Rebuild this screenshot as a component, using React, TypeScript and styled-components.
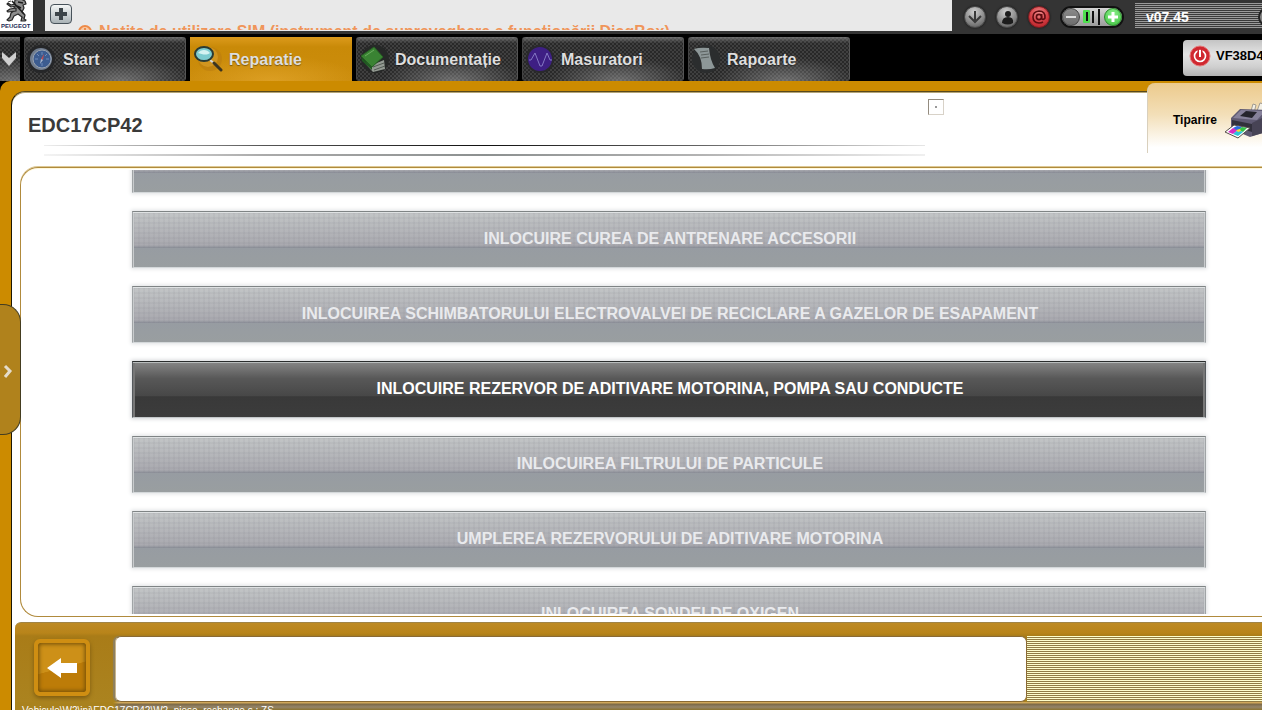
import React from "react";
import styled, { createGlobalStyle, css } from "styled-components";

const sans = '"Liberation Sans", Arial, sans-serif';
const gold = "#cc8b00";

const GlobalStyle = createGlobalStyle`
  *, *::before, *::after { box-sizing: border-box; }
  html, body { margin: 0; padding: 0; }
  body { font-family: ${sans}; background: #000; overflow: hidden; }
  button, input { font-family: inherit; margin: 0; padding: 0; border: 0; }
  button { cursor: pointer; }
`;

const Page = styled.div`
  position: relative;
  height: 100vh;
  display: flex;
  flex-direction: column;
  overflow: hidden;
`;

/* ---------- status bar ---------- */

const StatusBar = styled.header`
  flex: none;
  display: flex;
  align-items: flex-start;
  height: 34px;
  background: #343434;
`;

const Logo = styled.div`
  flex: none;
  width: 45px;
  height: 31px;
  background: linear-gradient(90deg, #fff 33px, #333 33px);
  svg { display: block; }
`;

const Notices = styled.div`
  flex: 1;
  min-width: 0;
  height: 31px;
  display: flex;
  gap: 6px;
  padding-left: 5px;
  background: #e9e9e9;
  overflow: hidden;
`;

const AddButton = styled.button`
  flex: none;
  width: 22px;
  height: 20px;
  margin-top: 4px;
  border: 1px solid #47525a;
  border-radius: 4px;
  background: linear-gradient(#f4f6f6, #a9b2b6);
  svg { display: block; margin: auto; }
`;

const NoticeClip = styled.div`
  display: flex;
  height: 30px;
  overflow: hidden;
`;

const Notice = styled.p`
  margin: 22px 0 0;
  display: flex;
  align-items: center;
  gap: 7px;
  height: 20px;
  font-size: 16px;
  line-height: 20px;
  font-weight: 700;
  white-space: nowrap;
  color: #f0955a;
  svg { flex: none; }
`;

const Tools = styled.div`
  flex: none;
  width: 310px;
  height: 34px;
  display: flex;
  align-items: center;
  padding-left: 12px;
  overflow: hidden;
`;

const RoundTool = styled.button<{ $hot?: boolean }>`
  flex: none;
  width: 22px;
  height: 22px;
  margin-right: 10px;
  border-radius: 50%;
  border: 1px solid ${(p) => (p.$hot ? "#7c1c20" : "#4a4a4a")};
  background: ${(p) =>
    p.$hot
      ? "radial-gradient(circle at 50% 30%, #f08a8a, #d03a40 55%, #b01c22)"
      : "radial-gradient(circle at 45% 25%, #d0d0d0, #858585 60%, #505050)"};
  box-shadow: 0 0 2px #111;
  svg { display: block; }
`;

const Contrast = styled.div`
  flex: none;
  display: flex;
  align-items: center;
  justify-content: space-between;
  width: 64px;
  height: 22px;
  margin-right: 11px;
  border: 2px solid #111;
  border-radius: 11px;
  background: linear-gradient(#d5d5d5, #9b9b9b);
`;

const Step = styled.button<{ $plus?: boolean }>`
  width: 18px;
  height: 18px;
  border-radius: 50%;
  border: 1px solid ${(p) => (p.$plus ? "#2c8a2c" : "#444")};
  background: ${(p) =>
    p.$plus
      ? "radial-gradient(circle at 50% 30%, #8cf08c, #3cbf3c)"
      : "linear-gradient(#8a8a8a, #6c6c6c)"};
  svg { display: block; }
`;

const Version = styled.div`
  flex: 1;
  align-self: flex-start;
  display: flex;
  align-items: center;
  justify-content: space-between;
  height: 25px;
  margin-top: 3px;
  padding: 2px 0 0 11px;
  background: repeating-linear-gradient(#9a9a9a 0 1px, #3a3a3a 1px 2px);
  font-size: 14px;
  line-height: 20px;
  font-weight: 700;
  color: #fff;
  overflow: hidden;
`;

const EdgeDot = styled.span`
  flex: none;
  width: 20px;
  height: 20px;
  margin-right: -16px;
  border: 2px solid #222;
  border-radius: 50%;
  background: #858585;
`;

/* ---------- tabs ---------- */

const NavBar = styled.nav`
  flex: none;
  display: flex;
  gap: 4px;
  height: 47px;
  padding-top: 3px;
  background: #000;
  overflow: hidden;
`;

const carbon = css`
  background:
    radial-gradient(ellipse 70px 24px at 60% 100%, rgba(170, 170, 170, 0.5), transparent),
    linear-gradient(rgba(130, 130, 130, 0.75), rgba(60, 60, 60, 0.1) 6px),
    repeating-conic-gradient(#262626 0 25%, #404040 0 50%) 0 0 / 4px 4px;
`;

const Collapse = styled.button`
  flex: none;
  width: 20px;
  height: 44px;
  ${carbon}
  svg { display: block; }
`;

const Tab = styled.button<{ $active?: boolean }>`
  flex: none;
  display: flex;
  align-items: center;
  gap: 6px;
  width: 162px;
  height: 44px;
  padding: 1px 0 0 1px;
  border-radius: 3px;
  text-align: left;
  font-size: 16px;
  line-height: 20px;
  font-weight: 700;
  color: #dedede;
  text-shadow: 0 1px 1px rgba(0, 0, 0, 0.4);
  ${(p) =>
    p.$active
      ? css`
          border-radius: 0;
          background:
            radial-gradient(ellipse 90px 26px at 50% 100%, rgba(230, 170, 50, 0.6), transparent),
            linear-gradient(#dc9a1c, #c98a08 10px, #cc8d0c);
        `
      : css`
          ${carbon}
          box-shadow: inset -1px 0 0 #555, inset 1px 0 0 #444;
        `}
  svg { flex: none; display: block; }
`;

const Vehicle = styled.button`
  flex: none;
  align-self: flex-start;
  display: flex;
  align-items: center;
  gap: 5px;
  width: 120px;
  height: 36px;
  margin: 3px -41px 0 auto;
  padding: 0 0 4px 6px;
  border-radius: 4px;
  background: linear-gradient(#c4c4c4, #e4e4e4 40%, #cfcfcf 75%, #b2b2b2);
  font-size: 13px;
  font-weight: 700;
  line-height: 16px;
  color: #000;
  white-space: nowrap;
  svg { flex: none; }
`;

/* ---------- workspace ---------- */

const Frame = styled.div`
  flex: 1;
  min-height: 0;
  display: flex;
  padding: 10px 0 0 11px;
  border-top-left-radius: 10px;
  background: ${gold};
`;

const Sheet = styled.main`
  flex: 1;
  min-width: 0;
  display: flex;
  flex-direction: column;
  border-top: 1px solid #57481c;
  border-left: 1px solid #1c1704;
  border-top-left-radius: 14px;
  background: #fff;
  box-shadow: inset 0 1px 0 #b3a478;
`;

const TitleRow = styled.div`
  flex: none;
  display: flex;
  height: 75px;
`;

const TitleBlock = styled.div`
  flex: 1;
  min-width: 0;
  padding: 21px 0 0 16px;
`;

const Title = styled.h1`
  margin: 0;
  height: 32px;
  font-size: 20px;
  line-height: 24px;
  font-weight: 700;
  color: #3a3a3a;
`;

const Rules = styled.div`
  display: flex;
  flex-direction: column;
  gap: 8px;
  margin: 0 0 0 16px;
  &::before, &::after { content: ""; display: block; }
  &::before {
    height: 1px;
    background: linear-gradient(90deg, #eee, #555 25%, #111 50%, #666 75%, #e6e6e6);
  }
  &::after {
    height: 2px;
    background: linear-gradient(90deg, #f4f4f4, #aaa 25%, #8c9090 50%, #b4b4b4 75%, #f0f0f0);
  }
`;

const Mark = styled.input`
  appearance: none;
  flex: none;
  width: 16px;
  height: 16px;
  margin: 7px 0 0 3px;
  border: 1px solid #d8d2c8;
  border-top-color: #948c80;
  border-left-color: #948c80;
  background: radial-gradient(circle, #999 1px, #fff 1px);
`;

const PrintButton = styled.button`
  flex: none;
  align-self: flex-start;
  display: flex;
  align-items: center;
  gap: 7px;
  width: 115px;
  height: 70px;
  margin: -9px 0 0 203px;
  padding: 3px 0 0 25px;
  border-left: 1px solid #d9d0bd;
  border-top-left-radius: 8px;
  background: linear-gradient(#ecca8c, #f3dfb8 45%, #fff 92%);
  font-size: 12px;
  font-weight: 700;
  color: #000;
  overflow: hidden;
  svg { flex: none; margin-top: 8px; }
`;

const ListPanel = styled.section`
  flex: 1;
  min-height: 0;
  display: flex;
  margin-left: 8px;
  padding: 2px 0 2px 104px;
  border: 1px solid #b08a3c;
  border-right: 0;
  border-radius: 18px 0 0 18px;
  box-shadow: 0 -1px 0 #dcc894, inset 0 1px 0 #fff8da;
`;

const List = styled.div`
  flex: 1;
  min-width: 0;
  display: flex;
  flex-direction: column;
  justify-content: center;
  gap: 18px;
  padding: 0 56px 6px 7px;
  overflow: hidden;
`;

const Operation = styled.button<{ $selected?: boolean }>`
  flex: none;
  height: 57px;
  padding-left: 2px;
  border: 1px solid;
  font-size: 16px;
  line-height: 20px;
  font-weight: 700;
  ${(p) =>
    p.$selected
      ? css`
          border-color: #2a2d2d #55595c #c4c8ca #55595c;
          color: #fff;
          background: linear-gradient(#868686, #585858 30%, #474747 62%, #393939 63%, #3c3c3c);
          box-shadow: inset 0 1px 0 #b8bcbc, inset 2px 0 0 #777, inset -2px 0 0 #777, 0 0 4px 1px #d4d6d8;
        `
      : css`
          border-color: #7f8485 #a0a4a6 #d4d8da #a0a4a6;
          color: #e9eaed;
          background:
            linear-gradient(transparent 36px, #979ca2 36px, #999ea0),
            repeating-linear-gradient(90deg, rgba(120, 120, 130, 0.08) 0 2px, transparent 2px 5px),
            repeating-linear-gradient(rgba(120, 120, 130, 0.08) 0 2px, transparent 2px 5px),
            linear-gradient(#c3c6c7, #a9a9af 33px, #8a8e97 36px);
          box-shadow: inset 0 1px 0 #dfe2e3, inset 1px 0 0 #c8cbcd, inset -1px 0 0 #c8cbcd, 0 0 4px 1px #dfe1e3;
        `}
`;

/* ---------- footer ---------- */

const Footer = styled.footer`
  flex: none;
  display: flex;
  flex-direction: column;
  height: 88px;
  margin: 5px 0 0 3px;
  padding-top: 13px;
  border-top: 1px solid #a08446;
  border-top-left-radius: 6px;
  background: linear-gradient(#bd8a24, #b8841a 10px, #a97c18 13px, #ab8420);
  overflow: hidden;
`;

const FooterRow = styled.div`
  flex: none;
  display: flex;
  height: 66px;
`;

const BackCell = styled.div`
  flex: none;
  width: 100px;
  padding: 3px 0 0 19px;
`;

const BackButton = styled.button`
  display: flex;
  align-items: center;
  justify-content: center;
  width: 56px;
  height: 57px;
  border: 4px solid #cf8e12;
  border-radius: 6px;
  background: linear-gradient(165deg, #cd9018 50%, #bd7c08 51%);
  box-shadow: inset 0 0 4px 1px #6e4c08, 0 2px 4px #7c5a10;
`;

const MessageBox = styled.input`
  flex: 1;
  min-width: 0;
  height: 66px;
  border: 1px solid #8a6a34;
  border-left-color: #c9b58c;
  border-radius: 6px;
  background: #fff;
  box-shadow: -2px 0 1px #8d8060;
  outline: 0;
`;

const Stripes = styled.div`
  flex: none;
  width: 235px;
  height: 66px;
  background: repeating-linear-gradient(#ffffcc 0 1px, #927c44 1px 2px);
`;

const PathLine = styled.div`
  flex: 1;
  display: flex;
  padding-left: 7px;
  background:
    linear-gradient(90deg, #a9821e 98px, transparent 104px),
    linear-gradient(#d0a85c 0 1px, #7b6844 2px, #94846a 5px, #8b7330);
  font-size: 10px;
  line-height: 12px;
  color: #fff;
  white-space: nowrap;
  overflow: hidden;
`;

const PathText = styled.span`
  padding-top: 3px;
`;

/* The drawer handle floats over the frame's left edge. */
const Drawer = styled.button`
  position: absolute;
  left: 0;
  top: 304px;
  width: 21px;
  height: 131px;
  border: 1px solid #443d20;
  border-left: 0;
  border-radius: 0 18px 18px 0;
  background: #b0821c;
  svg { display: block; }
`;

/* ---------- icons ---------- */

const LionLogo = () => (
  <svg width="33" height="31" viewBox="0 0 33 31">
    <g fill="#8d8d8d" stroke="#262626" strokeWidth="1.2" strokeLinejoin="round">
      <path d="M15 0l6-1 4 2 1 3-3 1 1 3-2 4 3 3-1 4 2 1-1 1h-4l1-4-4-3-4 2-2 4-3 1-2-1 3-3 1-4 4-3-1-3z" />
      <path d="M15 4l-4 1-3-2-1 1 4 3 5-1zM16 8l-6 1-3 2 1 1 8-1z" />
    </g>
    <path d="M12 1l12 13M18 2l5 1M17 6l4 2" stroke="#1c1c1c" strokeWidth="1.5" fill="none" />
    <path d="M8 2l3-1M22 17l4 3" stroke="#444" />
    <text x="1" y="28" fontFamily="Liberation Sans, sans-serif" fontWeight="700" fontSize="6" fill="#1b2a55">PEUGEOT</text>
  </svg>
);

const CompassIcon = () => (
  <svg width="32" height="36" viewBox="0 0 32 36">
    <circle cx="16" cy="17" r="14" fill="#252628" />
    <circle cx="16" cy="17" r="11" fill="#717d8e" />
    <circle cx="17" cy="17" r="9" fill="#3c5c90" stroke="#98a2b0" />
    <path d="M17 10v3M17 21v3M10 17h3M21 17h3M12 12l2 2M22 12l-2 2" stroke="#6f8cbc" />
    <path d="M19 12l-1 6-2-1z" fill="#c04c50" />
    <path d="M15 22l1-5 2 1z" fill="#a8b6cc" />
  </svg>
);

const LensIcon = () => (
  <svg width="32" height="36" viewBox="0 0 32 36">
    <circle cx="19" cy="17" r="12" fill="#b97c10" opacity="0.55" />
    <circle cx="17" cy="15" r="10" fill="#d59a24" opacity="0.8" />
    <path d="M19 18l5 4" stroke="#d8d8d8" strokeWidth="2" />
    <path d="M23 21l7 7" stroke="#3c3420" strokeWidth="3" strokeLinecap="round" />
    <ellipse cx="13" cy="12" rx="9" ry="7" fill="#7ccbd0" stroke="#2b3b34" strokeWidth="2" />
    <path d="M7 11c3-4 9-4 12 0-4 3-8 1-12 0z" fill="#d4f2f2" />
  </svg>
);

const BookIcon = () => (
  <svg width="32" height="36" viewBox="0 0 32 36">
    <circle cx="18" cy="17" r="14" fill="#262827" />
    <path d="M6 19l10 11 12-3-1-9-12 5z" fill="#939a92" />
    <path d="M16 25l11-4M17 28l11-4" stroke="#525a52" />
    <path d="M4 14L17 5l9 10-11 10z" fill="#3a8333" stroke="#276124" />
    <path d="M8 14l9-6" stroke="#6cae60" />
    <path d="M4 15l11 10v3L5 19z" fill="#1f5a20" />
  </svg>
);

const WaveIcon = () => (
  <svg width="32" height="36" viewBox="0 0 32 36">
    <circle cx="17" cy="17" r="14" fill="#29292c" />
    <circle cx="17" cy="17" r="12" fill="#3e1f84" />
    <path d="M6 18h2l4-7 5 13 2 0 5-13 3 7h2" fill="none" stroke="#8478c4" strokeWidth="1" />
  </svg>
);

const ReportIcon = () => (
  <svg width="32" height="36" viewBox="0 0 32 36">
    <circle cx="17" cy="17" r="14" fill="#2b2d2e" />
    <path d="M5 7q6-2 15-1 1 12 6 20-6 2-13 1 0-13-8-20z" fill="#8d9798" />
    <path d="M11 10l8-1M12 13l8-1M12 16l8-1" stroke="#59605f" />
  </svg>
);

const PrinterIcon = () => (
  <svg width="44" height="44" viewBox="0 0 44 44">
    <path d="M27 9l2-7 3 1-2 8zM33 9l3-8 4 1-2 9z" fill="#f3f0e6" stroke="#a09a90" />
    <path d="M7 16l9-9 26 1v22l-16 5-19-8z" fill="#5f5a72" />
    <path d="M9 16l8-8 24 1-8 9z" fill="#86819a" />
    <path d="M16 14l6-5 11 1-5 6z" fill="#25242c" />
    <path d="M8 18l20 4v8l-20-6z" fill="#32303c" />
    <path d="M28 21l14-7v16l-14 4z" fill="#474355" />
    <path d="M1 30l9-7 16 3-12 10z" fill="#fff" stroke="#554f4a" />
    <path d="M4 30l5-4 5 2-5 4z" fill="#d92ac4" />
    <path d="M9 26l4-2 5 1-4 4z" fill="#2b6be0" />
    <path d="M14 28l4-3 5 1-4 4z" fill="#36c24a" />
    <path d="M9 32l5-4 5 2-5 4z" fill="#2cc4d8" />
    <path d="M12 28l4-1 1 2-3 1z" fill="#ffd82a" />
  </svg>
);

const PowerIcon = () => (
  <svg width="22" height="22" viewBox="0 0 22 22">
    <circle cx="11" cy="11" r="10" fill="#d02830" stroke="#e67a7a" />
    <circle cx="11" cy="11" r="5.500" fill="none" stroke="#fff" strokeWidth="1.6" />
    <path d="M11 5v6" stroke="#d02830" strokeWidth="5" />
    <path d="M11 5v7" stroke="#fff" strokeWidth="2" />
  </svg>
);

/* ---------- data ---------- */

const tabs = [
  { label: "Start", icon: <CompassIcon /> },
  { label: "Reparatie", icon: <LensIcon />, active: true },
  { label: "Documentație", icon: <BookIcon /> },
  { label: "Masuratori", icon: <WaveIcon /> },
  { label: "Rapoarte", icon: <ReportIcon /> },
];

const operations = [
  "INLOCUIRE CUREA DE ANTRENARE ACCESORII",
  "INLOCUIREA SCHIMBATORULUI ELECTROVALVEI DE RECICLARE A GAZELOR DE ESAPAMENT",
  "INLOCUIRE REZERVOR DE ADITIVARE MOTORINA, POMPA SAU CONDUCTE",
  "INLOCUIREA FILTRULUI DE PARTICULE",
  "UMPLEREA REZERVORULUI DE ADITIVARE MOTORINA",
  "INLOCUIREA SONDEI DE OXIGEN",
];
const selectedOperation = 2;

export default function App() {
  return (
    <Page>
      <GlobalStyle />
      <StatusBar>
        <Logo><LionLogo /></Logo>
        <Notices>
          <AddButton aria-label="Adauga">
            <svg width="14" height="14" viewBox="0 0 14 14">
              <path d="M5 1h4v4h4v4H9v4H5V9H1V5h4z" fill="#3c4449" />
            </svg>
          </AddButton>
          <NoticeClip>
            <Notice>
              <svg width="14" height="14" viewBox="0 0 14 14">
                <circle cx="7" cy="7" r="6" fill="#f7c9a4" stroke="#ee8a48" strokeWidth="2" />
                <path d="M7 3v5M7 9v2" stroke="#ee8a48" strokeWidth="2" />
              </svg>
              Notite de utilizare SIM (instrument de supraveghere a funcționării DiagBox)
            </Notice>
          </NoticeClip>
        </Notices>
        <Tools>
          <RoundTool aria-label="Descarca">
            <svg width="20" height="20" viewBox="0 0 20 20">
              <path d="M10 4v10M4 9l6 6 6-6" fill="none" stroke="#3a3a3a" strokeWidth="2" />
            </svg>
          </RoundTool>
          <RoundTool aria-label="Utilizator">
            <svg width="20" height="20" viewBox="0 0 20 20">
              <circle cx="11" cy="7" r="3" fill="#1c1c1c" />
              <path d="M5 16q0-6 6-6t5 6q-5 3-11 0z" fill="#1c1c1c" />
            </svg>
          </RoundTool>
          <RoundTool $hot aria-label="E-mail">
            <svg width="20" height="20" viewBox="0 0 20 20">
              <g fill="none" stroke="#5c0c10" strokeWidth="1.6">
                <circle cx="10" cy="10" r="2.6" />
                <path d="M12.6 7v4.500q1.600 2 3.400-.5Q16.500 4 10 4q-6 .5-6 6t6 6q2.500 0 4-1" />
              </g>
            </svg>
          </RoundTool>
          <Contrast>
            <Step aria-label="Mai putin">
              <svg width="16" height="16" viewBox="0 0 16 16"><path d="M3 8h10" stroke="#ddd" strokeWidth="2" /></svg>
            </Step>
            <svg width="20" height="18" viewBox="0 0 20 18">
              <rect x="1" y="2" width="7" height="13" rx="1" fill="#4fe04f" />
              <path d="M5 4v9M11 3v12" stroke="#111" strokeWidth="2" />
              <path d="M17 1v16" stroke="#111" strokeWidth="2" />
            </svg>
            <Step $plus aria-label="Mai mult">
              <svg width="16" height="16" viewBox="0 0 16 16"><path d="M3 8h10M8 3v10" stroke="#fff" strokeWidth="3" /></svg>
            </Step>
          </Contrast>
          <Version>v07.45<EdgeDot /></Version>
        </Tools>
      </StatusBar>

      <NavBar>
        <Collapse aria-label="Restrange">
          <svg width="20" height="44" viewBox="0 0 20 44">
            <path d="M2 15l7 6 7-6v6l-7 8-7-8z" fill="#d0d0d0" />
          </svg>
        </Collapse>
        {tabs.map((t) => (
          <Tab key={t.label} $active={t.active}>{t.icon}{t.label}</Tab>
        ))}
        <Vehicle><PowerIcon />VF38D4</Vehicle>
      </NavBar>

      <Frame>
        <Sheet>
          <TitleRow>
            <TitleBlock>
              <Title>EDC17CP42</Title>
              <Rules />
            </TitleBlock>
            <Mark type="checkbox" aria-label="Marcaj" />
            <PrintButton>Tiparire<PrinterIcon /></PrintButton>
          </TitleRow>

          <ListPanel>
            <List>
              <Operation aria-label="Operatia anterioara" />
              {operations.map((name, i) => (
                <Operation key={name} $selected={i === selectedOperation}>{name}</Operation>
              ))}
            </List>
          </ListPanel>

          <Footer>
            <FooterRow>
              <BackCell>
                <BackButton aria-label="Inapoi">
                  <svg width="32" height="20" viewBox="0 0 32 20">
                    <path d="M1 10L15 0v5h16v10H15v5z" fill="#fff" />
                  </svg>
                </BackButton>
              </BackCell>
              <MessageBox aria-label="Mesaj" />
              <Stripes />
            </FooterRow>
            <PathLine>
              <PathText>Vehicule\W2\ini\EDC17CP42\W2_piese_rechange.s : ZS</PathText>
            </PathLine>
          </Footer>
        </Sheet>
      </Frame>

      <Drawer aria-label="Deschide meniul">
        <svg width="20" height="131" viewBox="0 0 20 131">
          <path d="M5 61l5 5-5 6" fill="none" stroke="#e4dccb" strokeWidth="3" />
        </svg>
      </Drawer>
    </Page>
  );
}
